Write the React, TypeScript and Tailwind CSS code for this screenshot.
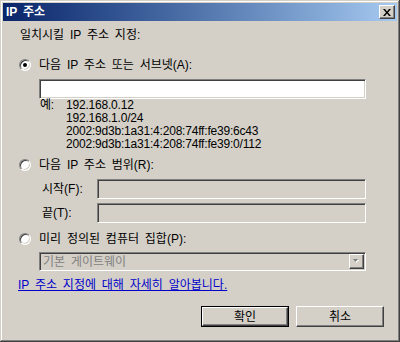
import React from 'react'

const FONT = { fontFamily: '"Liberation Sans", "Noto Sans CJK KR", sans-serif' }

const SUNKEN =
  'border border-t-[#808080] border-l-[#808080] border-b-white border-r-white shadow-[inset_1px_1px_0_#404040,inset_-1px_-1px_0_#d4d0c8]'

const RAISED =
  'border border-t-white border-l-white border-b-[#404040] border-r-[#404040] shadow-[inset_-1px_-1px_0_#808080]'

function Radio({ checked, label }: { checked?: boolean; label: string }) {
  return (
    <div className="flex items-center h-[16px] pl-[19px] gap-[8px]">
      <div className="w-[12px] h-[12px] rounded-full border border-t-[#808080] border-l-[#808080] border-b-white border-r-white flex items-center justify-center bg-white shadow-[inset_1px_1px_0_#404040,inset_-1px_-1px_0_#d4d0c8]">
        {checked && <div className="w-[4px] h-[4px] rounded-full bg-black" />}
      </div>
      <span className="leading-[16px]">{label}</span>
    </div>
  )
}

function Button({ label, isDefault }: { label: string; isDefault?: boolean }) {
  return (
    <div className={`w-[88px] h-[21px] ${isDefault ? 'border border-black' : ''}`}>
      <div className={`w-full h-full ${RAISED} bg-[#d4d0c8] flex items-center justify-center leading-[16px]`}>
        {label}
      </div>
    </div>
  )
}

export default function App() {
  return (
    <div
      className="w-[400px] h-[342px] bg-[#d4d0c8] text-[12px] [word-spacing:2.5px] text-black flex flex-col shadow-[inset_-1px_-1px_0_#404040,inset_1px_1px_0_#d4d0c8,inset_-2px_-2px_0_#808080,inset_2px_2px_0_#ffffff]"
      style={FONT}
    >
      {/* Title bar */}
      <div className="mx-[3px] mt-[3px] h-[18px] bg-gradient-to-r from-[#0a246a] to-[#a6caf0] flex items-center justify-between pl-[3px] pr-[2px]">
        <span className="text-white font-bold text-[12px] leading-[16px]">IP 주소</span>
        <div className={`w-[16px] h-[14px] bg-[#d4d0c8] ${RAISED} flex items-center justify-center`}>
          <svg width="8" height="7" viewBox="0 0 8 7">
            <path d="M0 0h2l2 2.5L6 0h2L5 3.5 8 7H6L4 4.5 2 7H0l3-3.5z" fill="#000" />
          </svg>
        </div>
      </div>

      {/* Body */}
      <div className="flex flex-col">
        <div className="mt-[6px] ml-[20px] leading-[16px]">일치시킬 IP 주소 지정:</div>

        <div className="mt-[14px]">
          <Radio checked label="다음 IP 주소 또는 서브넷(A):" />
        </div>
        <div className={`mt-[6px] ml-[39px] w-[327px] h-[20px] bg-white ${SUNKEN}`} />
        <div className="ml-[40px] flex leading-[13px] tracking-[-0.2px] [word-spacing:0px]">
          <span className="w-[26px]">예:</span>
          <div className="flex flex-col">
            <span>192.168.0.12</span>
            <span>192.168.1.0/24</span>
            <span>2002:9d3b:1a31:4:208:74ff:fe39:6c43</span>
            <span>2002:9d3b:1a31:4:208:74ff:fe39:0/112</span>
          </div>
        </div>

        <div className="mt-[6px]">
          <Radio label="다음 IP 주소 범위(R):" />
        </div>
        <div className="mt-[6px] ml-[42px] flex items-center">
          <span className="w-[55px] leading-[16px]">시작(F):</span>
          <div className={`w-[269px] h-[20px] bg-[#d4d0c8] ${SUNKEN}`} />
        </div>
        <div className="mt-[4px] ml-[42px] flex items-center">
          <span className="w-[55px] leading-[16px]">끝(T):</span>
          <div className={`w-[269px] h-[20px] bg-[#d4d0c8] ${SUNKEN}`} />
        </div>

        <div className="mt-[8px]">
          <Radio label="미리 정의된 컴퓨터 집합(P):" />
        </div>
        <div className={`mt-[5px] ml-[39px] w-[327px] h-[19px] bg-[#d4d0c8] ${SUNKEN} flex items-center justify-between pl-[3px] pr-[1px]`}>
          <span className="text-[#808080] leading-[16px]">기본 게이트웨이</span>
          <div className={`w-[15px] h-[15px] ${RAISED} flex items-center justify-center`}>
            <svg width="7" height="5" viewBox="0 0 7 5">
              <path d="M1 1h5L3.5 4z" fill="#ffffff" />
              <path d="M0 0h5L2.5 3z" fill="#808080" />
            </svg>
          </div>
        </div>

        <div className="mt-[6px] ml-[18px] leading-[16px] text-[#0000c8] underline">
          IP 주소 지정에 대해 자세히 알아봅니다.
        </div>

        <div className="mt-[13px] flex justify-end gap-[7px] pr-[16px]">
          <Button label="확인" isDefault />
          <Button label="취소" />
        </div>
      </div>
    </div>
  )
}
